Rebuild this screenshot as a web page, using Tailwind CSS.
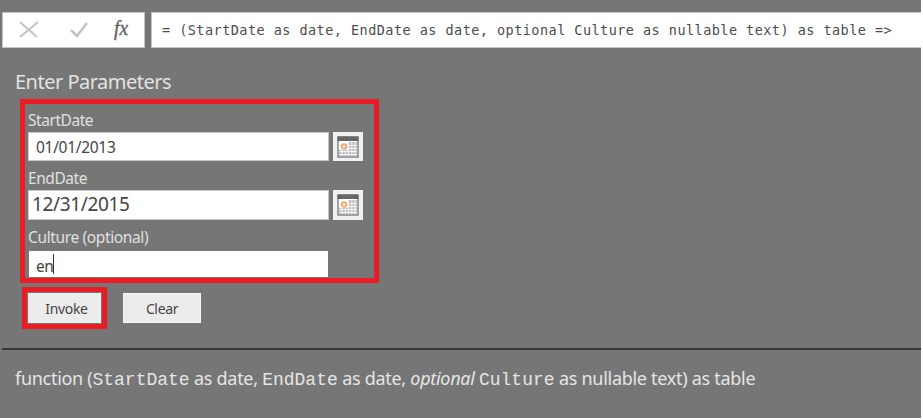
<!DOCTYPE html>
<html lang="en">
<head>
<meta charset="utf-8">
<title>Enter Parameters</title>
<script src="https://cdn.jsdelivr.net/npm/@tailwindcss/browser@4"></script>
</head>
<body class="h-[420px] w-[923px] overflow-hidden bg-white font-['Noto_Sans','Open_Sans',sans-serif]">
<svg class="hidden">
  <symbol id="calendar" viewBox="0 0 22 22">
    <path d="M1 1h20v20H1z" fill="#fff" stroke="#858585" stroke-width="1.5"/>
    <path d="M.5.500h21v4.500H.5z" fill="#666"/>
    <path d="M11 6h9v14h-9zM2 14h9v6H2z" fill="#b9c0c6"/>
    <path d="M11.500 6v14M14.800 6v14M18 6v14M5 14v6M8.300 14v6M11 9.500h9M11 12.500h9M2 15.500h18M2 18.500h18" stroke="#fff" stroke-width=".8"/>
    <circle cx="7" cy="10.500" r="2.500" fill="#fde4cf" stroke="#f4a56a" stroke-width="1.700"/>
  </symbol>
</svg>
<main class="flex h-[418px] w-[921px] flex-col bg-[#767676] pt-3">
  <div class="flex h-[36px] shrink-0 gap-1.5 pl-0.5">
    <div class="w-[143px] border border-[#c4c4c4] bg-white">
      <svg class="h-[34px] w-[141px]" viewBox="3 13 141 34" fill="none">
        <path d="M20 22l17 15M38 22L20 37" stroke="#c4c4c4" stroke-width="2.200"/>
        <path d="M71 30l6 6L87 23" stroke="#c4c4c4" stroke-width="2.600"/>
        <text x="114" y="35" font-family="Liberation Serif, serif" font-style="italic" font-size="20" textLength="14" lengthAdjust="spacingAndGlyphs" fill="#5d5d5d" stroke="#5d5d5d" stroke-width=".3">fx</text>
      </svg>
    </div>
    <div class="flex flex-1 items-center border border-r-0 border-[#c4c4c4] bg-white pl-2.5 font-['DejaVu_Sans_Mono',monospace] text-[13.5px] tracking-[0.462px] whitespace-pre text-[#4c4c4c]">= (StartDate as date, EndDate as date, optional Culture as nullable text) as table =&gt;</div>
  </div>
  <h1 class="mt-[20px] h-[31px] shrink-0 pl-[15px] text-[20px] leading-[28px] tracking-[-0.5px] whitespace-nowrap text-[#e2e2e2]">Enter Parameters</h1>
  <section class="ml-5 h-[184px] w-[359px] shrink-0 border-[5px] border-[#ed1c24] pl-[3px] text-[15.5px] tracking-[-0.45px] text-[#e0e0e0]">
    <div class="h-[28px] pt-[6px] leading-[20px]">StartDate</div>
    <div class="flex h-[29px] gap-1">
      <div class="flex w-[301px] items-center border border-[#c8c8c8] bg-white pt-0.5 pl-[7px] text-[15.500px] tracking-[-0.3px] text-[#444]">01/01/2013</div>
      <div class="flex w-[30px] items-center justify-center bg-[#f1f1f1]"><svg class="size-[22px]"><use href="#calendar"/></svg></div>
    </div>
    <div class="h-[29px] pt-[7px] leading-[20px]">EndDate</div>
    <div class="flex h-[30px] gap-1">
      <div class="flex w-[301px] items-center border border-[#c8c8c8] bg-white pb-px pl-[3px] text-[19px] tracking-[-0.35px] text-[#444]">12/31/2015</div>
      <div class="flex w-[30px] items-center justify-center bg-[#f1f1f1]"><svg class="size-[22px]"><use href="#calendar"/></svg></div>
    </div>
    <div class="h-[31px] pt-[7px] leading-[20px] tracking-[-0.37px]">Culture (optional)</div>
    <div class="ml-px flex h-[26px] w-[299px] items-center bg-white pt-1 pl-[7px] text-[15.5px] leading-[20px] text-[#444]">en<span class="mb-1 h-[20px] w-px bg-[#333]"></span></div>
  </section>
  <div class="mt-[4px] ml-[22px] flex shrink-0 text-[14px] tracking-[-0.35px] text-[#444]">
    <div class="h-[42px] w-[85px] border-[5px] border-[#ed1c24] p-px">
      <button class="block h-[30px] w-[73px] bg-[#ececec] pl-1">Invoke</button>
    </div>
    <button class="mt-[6px] ml-[16px] h-[30px] w-[78px] border border-[#f4f4f4] bg-[#ececec]">Clear</button>
  </div>
  <hr class="mt-[19px] ml-0.5 h-[2px] shrink-0 border-0 bg-[#383838]">
  <p class="mt-[15px] pl-[15px] text-[18px] leading-[26px] tracking-[-0.29px] whitespace-nowrap text-[#e5e5e5]">function (<span class="font-['Liberation_Mono',monospace] tracking-normal">StartDate</span> as date, <span class="font-['Liberation_Mono',monospace] tracking-normal">EndDate</span> as date, <em>optional</em> <span class="font-['Liberation_Mono',monospace] tracking-normal">Culture</span> as nullable text) as table</p>
</main>
</body>
</html>
